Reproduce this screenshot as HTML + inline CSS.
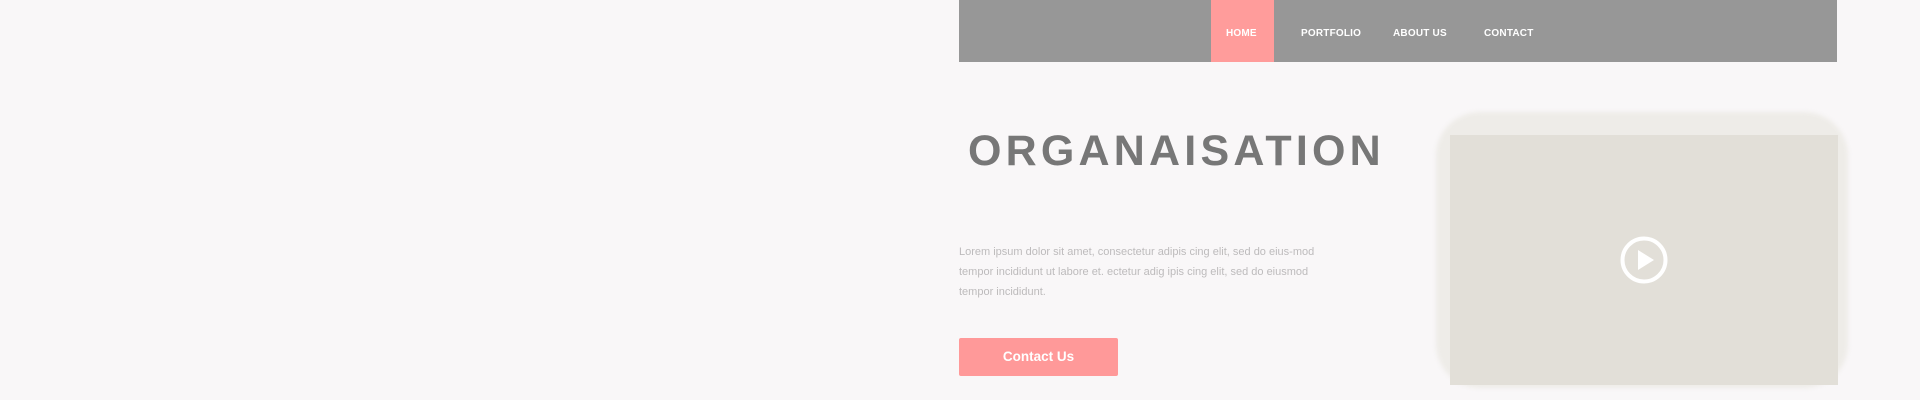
<!DOCTYPE html>
<html><head><meta charset="utf-8">
<style>
html,body{margin:0;padding:0;}
body{width:1920px;height:400px;background:#f9f7f8;position:relative;overflow:hidden;font-family:"Liberation Sans",sans-serif;}
.nav{position:absolute;left:959px;top:0;width:878px;height:62px;background:#979797;}
.home{position:absolute;left:1211px;top:0;width:63px;height:62px;background:#ff9c9b;}
.ni{position:absolute;top:28px;font-size:10px;font-weight:bold;color:#fff;letter-spacing:0.2px;}
h1{position:absolute;left:968px;top:123px;margin:0;font-size:43px;font-weight:bold;letter-spacing:4.2px;color:#777;line-height:56px;}
p{position:absolute;left:959px;top:242px;margin:0;width:372px;font-size:11px;line-height:20px;color:#bdbbbc;}
.btn{position:absolute;left:959px;top:338px;width:159px;height:38px;background:#ff9999;border-radius:2px;color:#fff;font-weight:bold;font-size:13.5px;text-align:center;line-height:38px;}
.outer{position:absolute;left:1436px;top:112px;width:412px;height:276px;background:#eeece8;border-radius:44px;filter:blur(2px);}
.inner{position:absolute;left:1450px;top:135px;width:388px;height:250px;background:#e2dfd8;}
</style></head><body>
<div class="nav"></div>
<div class="home"></div>
<div class="ni" style="left:1226px">HOME</div>
<div class="ni" style="left:1301px">PORTFOLIO</div>
<div class="ni" style="left:1393px">ABOUT US</div>
<div class="ni" style="left:1484px">CONTACT</div>
<h1>ORGANAISATION</h1>
<p>Lorem ipsum dolor sit amet, consectetur adipis cing elit, sed do eius-mod tempor incididunt ut labore et. ectetur adig ipis cing elit, sed do eiusmod tempor incididunt.</p>
<div class="btn">Contact Us</div>
<div class="outer"></div>
<div class="inner"></div>
<svg style="position:absolute;left:1620px;top:236px" width="48" height="48" viewBox="0 0 48 48">
<circle cx="24" cy="24" r="21.5" fill="none" stroke="#fff" stroke-width="4"/>
<path d="M18 14 L34 24 L18 34 Z" fill="#fff"/>
</svg>
</body></html>
